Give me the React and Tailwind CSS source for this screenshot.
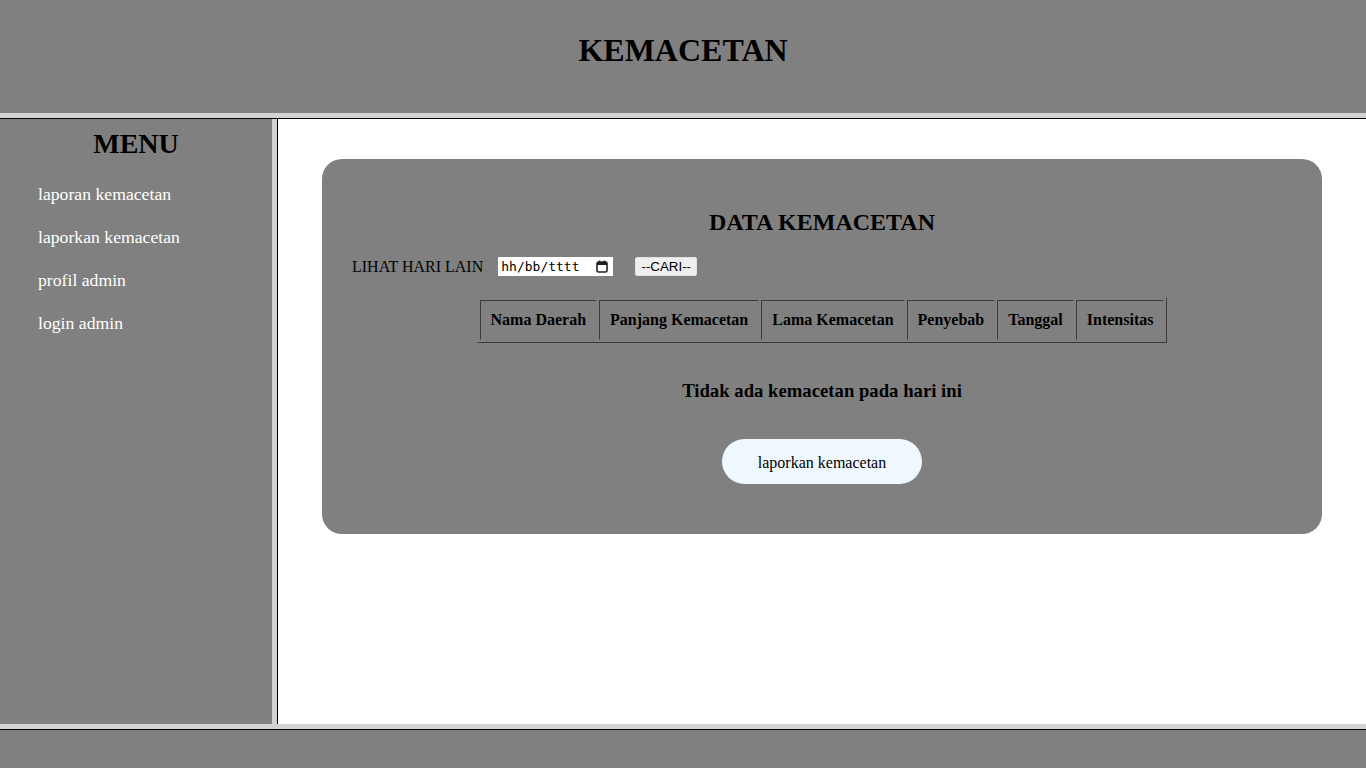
import React from "react";

const menuItems = ["laporan kemacetan", "laporkan kemacetan", "profil admin", "login admin"];
const columns = ["Nama Daerah", "Panjang Kemacetan", "Lama Kemacetan", "Penyebab", "Tanggal", "Intensitas"];

const serif = "font-['Liberation_Serif','Times_New_Roman',serif]";

// fake date input so the placeholder does not depend on the browser locale
const DateField = () => (
  <div className="w-[115px] h-[19px] bg-white flex items-center justify-between pl-[3px] pr-[5px]">
    <span className="font-['DejaVu_Sans_Mono',monospace] text-[13px] leading-[19px] text-black">hh/bb/tttt</span>
    <svg width="12" height="13" viewBox="0 0 12 13" fill="none">
      <rect x="1" y="2" width="10" height="10" rx="1.5" stroke="#222" strokeWidth="1.6" />
      <rect x="1" y="2" width="10" height="3" fill="#222" />
      <line x1="3.5" y1="0.5" x2="3.5" y2="3" stroke="#222" strokeWidth="1.4" />
      <line x1="8.5" y1="0.5" x2="8.5" y2="3" stroke="#222" strokeWidth="1.4" />
    </svg>
  </div>
);

export default function App() {
  return (
    <div className={`h-screen flex flex-col bg-white text-black ${serif}`}>
      {/* header */}
      <header className="shrink-0 h-[118px] bg-[#808080] border-b-[5px] border-[#d3d3d3] flex justify-center pt-[32px]">
        <h1 className="text-[32px] leading-[37px] font-bold">KEMACETAN</h1>
      </header>
      <div className="shrink-0 h-px bg-black" />

      <div className="flex flex-1 min-h-0">
        {/* sidebar */}
        <div className="shrink-0 border-r border-black">
          <aside className="w-[277px] h-full bg-[#808080] border-r-[5px] border-[#d3d3d3] pt-[9px]">
            <h2 className="text-center text-[28px] leading-[32px] font-bold">MENU</h2>
            <ul className="mt-[24px] flex flex-col gap-[22px] pl-[38px]">
              {menuItems.map((item) => (
                <li key={item} className="text-white text-[17.7px] leading-[21px]">
                  {item}
                </li>
              ))}
            </ul>
          </aside>
        </div>

        {/* main */}
        <main className="flex-1 px-[44px] pt-[40px]">
          <div className="bg-[#808080] rounded-[20px] flex flex-col items-center pt-[49px] pb-[50px]">
            <h2 className="text-[24px] leading-[28px] font-bold">DATA KEMACETAN</h2>

            <div className="self-start ml-[30px] mt-[21px] h-[19px] flex items-center">
              <span className="text-[16px] leading-[19px]">LIHAT HARI LAIN</span>
              <div className="ml-[15px]">
                <DateField />
              </div>
              <button className="ml-[22px] w-[62px] h-[19px] bg-[#efefef] rounded-[2px] border border-[#e2e2e2] font-['Liberation_Sans',Arial,sans-serif] text-[13.33px] leading-[17px] text-black">
                --CARI--
              </button>
            </div>

            <table className="mt-[21px] border-separate border-spacing-[2px] border border-t-[#808080] border-l-[#808080] border-b-[#3c3c3c] border-r-[#3c3c3c]">
              <thead>
                <tr>
                  {columns.map((col) => (
                    <th
                      key={col}
                      className="px-[10px] py-[10px] text-[16px] leading-[18px] font-bold border border-t-[#3c3c3c] border-l-[#3c3c3c] border-b-[#808080] border-r-[#808080]"
                    >
                      {col}
                    </th>
                  ))}
                </tr>
              </thead>
            </table>

            <h3 className="mt-[37px] text-[18.72px] leading-[22px] font-bold">Tidak ada kemacetan pada hari ini</h3>

            <button className="mt-[37px] w-[200px] h-[45px] rounded-full bg-[#f0f8ff] text-[16px] leading-[18px] pt-[2px] text-black">
              laporkan kemacetan
            </button>
          </div>
        </main>
      </div>

      {/* footer */}
      <div className="shrink-0 h-[5px] bg-[#d3d3d3]" />
      <div className="shrink-0 h-px bg-black" />
      <footer className="shrink-0 h-[38px] bg-[#808080]" />
    </div>
  );
}
